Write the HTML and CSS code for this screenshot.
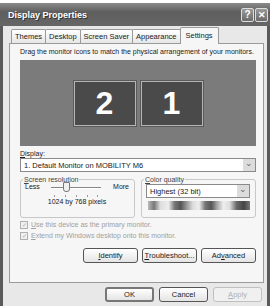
FILE: index.html
```html
<!DOCTYPE html>
<html lang="en">
<head>
    <meta charset="UTF-8">
    <title>Display Properties</title>
    <link rel="stylesheet" href="styles.css">
</head>
<body>
    <div class="window">
        <div class="title-bar">
            <span class="title">Display Properties</span>
            <div class="title-buttons">
                <span class="tb-btn">?</span>
                <span class="tb-btn close">✕</span>
            </div>
        </div>

        <div class="tabs">
            <span class="tab">Themes</span>
            <span class="tab">Desktop</span>
            <span class="tab">Screen Saver</span>
            <span class="tab">Appearance</span>
            <span class="tab active">Settings</span>
        </div>

        <div class="panel">
            <p class="hint">Drag the monitor icons to match the physical arrangement of your monitors.</p>

            <div class="monitor-area">
                <div class="monitor">2</div>
                <div class="monitor">1</div>
            </div>

            <div class="label"><u>D</u>isplay:</div>
            <div class="select wide">
                <span>1. Default Monitor on MOBILITY M6</span>
                <span class="arrow">&#8964;</span>
            </div>

            <div class="groups">
                <fieldset class="group">
                    <legend><u>S</u>creen resolution</legend>
                    <div class="slider-row">
                        <span>Less</span>
                        <div class="slider">
                            <div class="track"></div>
                            <div class="thumb"></div>
                            <div class="ticks">
                                <i></i><i></i><i></i><i></i><i></i>
                            </div>
                        </div>
                        <span>More</span>
                    </div>
                    <div class="res-text">1024 by 768 pixels</div>
                </fieldset>
                <fieldset class="group">
                    <legend><u>C</u>olor quality</legend>
                    <div class="select small">
                        <span>Highest (32 bit)</span>
                        <span class="arrow">&#8964;</span>
                    </div>
                    <div class="color-bar"></div>
                </fieldset>
            </div>

            <div class="check"><span class="box">✓</span><span><u>U</u>se this device as the primary monitor.</span></div>
            <div class="check"><span class="box">✓</span><span><u>E</u>xtend my Windows desktop onto this monitor.</span></div>

            <div class="button-row">
                <span class="button"><u>I</u>dentify</span>
                <span class="button"><u>T</u>roubleshoot...</span>
                <span class="button">Ad<u>v</u>anced</span>
            </div>
        </div>

        <div class="footer">
            <span class="button default">OK</span>
            <span class="button">Cancel</span>
            <span class="button disabled"><u>A</u>pply</span>
        </div>
    </div>
</body>
</html>
```

FILE: styles.css
```css
body, html {
    margin: 0;
    padding: 0;
    background-color: #ffffff;
    font-family: "Liberation Sans", Arial, sans-serif;
    font-size: 7px;
    color: #1a1a1a;
}

.window {
    margin-top: 3px;
    width: 270px;
    height: 303px;
    box-sizing: border-box;
    background-color: #e8e8e8;
    border-left: 3px solid #5a5a5a;
    border-right: 3px solid #5a5a5a;
    display: flex;
    flex-direction: column;
}

.title-bar {
    height: 23px;
    margin: 0 -3px;
    padding: 0 2px 0 8px;
    background: linear-gradient(#8a8a8a, #5e5e5e 40%, #666666);
    display: flex;
    align-items: center;
    justify-content: space-between;
}

.title {
    color: #ffffff;
    font-family: "Liberation Sans", Arial, sans-serif;
    font-weight: bold;
    font-size: 9px;
    text-shadow: 1px 1px 0 #333333;
}

.title-buttons {
    display: flex;
    gap: 1px;
}

.tb-btn {
    width: 13px;
    height: 14px;
    box-sizing: border-box;
    border: 1px solid #dddddd;
    border-radius: 2px;
    background: linear-gradient(#9a9a9a, #6a6a6a);
    color: #ffffff;
    font-weight: bold;
    font-size: 10px;
    display: flex;
    align-items: center;
    justify-content: center;
}

.tb-btn.close {
    font-size: 9px;
}

.tabs {
    display: flex;
    align-items: flex-end;
    height: 17px;
    padding-left: 8px;
}

.tab {
    height: 14px;
    box-sizing: border-box;
    padding: 2px 3px 0;
    border: 1px solid #9a9a9a;
    border-bottom: none;
    border-radius: 2px 2px 0 0;
    background: linear-gradient(#ffffff, #e6e6e6);
    margin-right: -1px;
    font-size: 7.5px;
}

.tab.active {
    height: 17px;
    padding: 3px 5px 0;
    background-color: #f6f6f6;
    background-image: none;
    position: relative;
    z-index: 1;
    margin-bottom: -1px;
}

.panel {
    margin: 0 3px 0 6px;
    height: 240px;
    box-sizing: border-box;
    border: 1px solid #9a9a9a;
    background-color: #f6f6f6;
    padding: 0 7px 0 10px;
    display: flex;
    flex-direction: column;
}

.hint {
    margin: 4px 0 5px;
    font-size: 7px;
    white-space: nowrap;
}

.monitor-area {
    height: 86px;
    background-color: #7b7b7b;
    display: flex;
    justify-content: center;
    align-items: center;
    gap: 5px;
}

.monitor {
    width: 62px;
    height: 45px;
    box-sizing: border-box;
    background-color: #4a4a4a;
    border: 1px solid #b5b5b5;
    outline: 1px solid #5a5a5a;
    color: #ffffff;
    font-weight: bold;
    font-size: 32px;
    display: flex;
    align-items: center;
    justify-content: center;
}

.label {
    margin-top: 4px;
    font-size: 7px;
}

.select {
    height: 14px;
    box-sizing: border-box;
    border: 1px solid #8a8a8a;
    background-color: #ffffff;
    display: flex;
    align-items: center;
    justify-content: space-between;
    padding-left: 3px;
    font-size: 7.5px;
}

.select.wide {
    margin-top: 1px;
}

.arrow {
    width: 12px;
    height: 12px;
    background-color: #dcdcdc;
    color: #666666;
    font-size: 9px;
    line-height: 8px;
    text-align: center;
}

.groups {
    display: flex;
    gap: 6px;
    margin-top: 4px;
}

.group {
    flex: 1;
    margin: 0;
    height: 42px;
    box-sizing: border-box;
    border: 1px solid #c8c8c8;
    border-radius: 3px;
    padding: 0 5px 0 4px;
    min-width: 0;
}

.group legend {
    padding: 0 1px;
    color: #444444;
    font-size: 7px;
    margin-left: -2px;
}

.slider-row {
    display: flex;
    justify-content: space-between;
    align-items: flex-start;
}

.slider {
    position: relative;
    width: 50px;
    height: 14px;
}

.track {
    margin-top: 4px;
    height: 1px;
    border-bottom: 1px solid #ffffff;
    background-color: #888888;
}

.thumb {
    position: absolute;
    left: 12px;
    top: -1px;
    width: 7px;
    height: 10px;
    box-sizing: border-box;
    border: 1px solid #777777;
    border-radius: 1px 1px 3px 3px;
    background-color: #f0f0f0;
}

.ticks {
    display: flex;
    justify-content: space-between;
    margin-top: 6px;
    padding: 0 3px;
}

.ticks i {
    width: 1px;
    height: 2px;
    background-color: #999999;
}

.res-text {
    text-align: center;
    font-size: 7px;
    margin-top: 1px;
}

.select.small {
    margin-top: 1px;
}

.color-bar {
    margin-top: 3px;
    height: 9px;
    margin-left: 2px;
    background: linear-gradient(90deg, #bbbbbb 0%, #777777 6%, #dddddd 12%, #eeeeee 20%, #777777 26%, #555555 32%, #999999 38%, #dddddd 44%, #eeeeee 50%, #777777 56%, #555555 62%, #aaaaaa 68%, #eeeeee 74%, #dddddd 80%, #666666 87%, #444444 94%, #777777 100%);
}

.check {
    display: flex;
    align-items: center;
    gap: 3px;
    margin-top: 2px;
    color: #a0a0a0;
    font-size: 7px;
    height: 9px;
}

.check:first-of-type {
    margin-top: 5px;
}

.box {
    width: 8px;
    height: 8px;
    box-sizing: border-box;
    border: 1px solid #b0b0b0;
    background-color: #f0f0f0;
    font-size: 6px;
    line-height: 6px;
    text-align: center;
    color: #a8a8a8;
}

.button-row {
    display: flex;
    justify-content: flex-end;
    gap: 4px;
    margin-top: 8px;
}

.button {
    width: 55px;
    height: 15px;
    box-sizing: border-box;
    border: 1px solid #555555;
    border-radius: 3px;
    background: linear-gradient(#ffffff, #e4e4e4);
    display: flex;
    align-items: center;
    justify-content: center;
    font-size: 7.5px;
}

.footer {
    display: flex;
    justify-content: flex-end;
    gap: 5px;
    padding: 4px 5px 0 0;
}

.footer .button {
    width: 49px;
}

.button.default {
    border-width: 2px;
    border-color: #777777;
}

.button.disabled {
    color: #b0b0b0;
    border-color: #c0c0c0;
    background: #f0f0f0;
}
```
